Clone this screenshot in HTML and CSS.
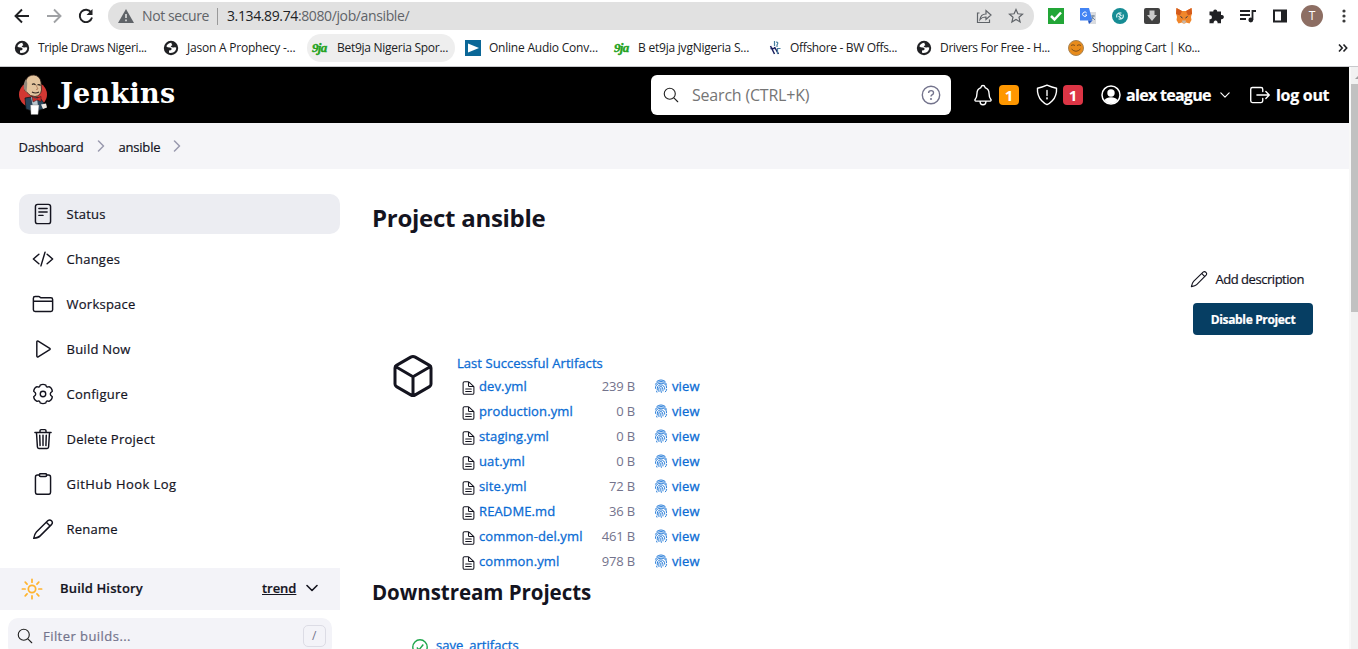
FILE: index.html
```html
<!DOCTYPE html>
<html lang="en">
<head>
<meta charset="utf-8">
<title>ansible [Jenkins]</title>
<link rel="stylesheet" href="styles.css">
</head>
<body>
<svg class="sprite" aria-hidden="true">
  <symbol id="status" viewBox="0 0 512 512"><rect x="80" y="32" width="352" height="448" rx="52"/><path d="M160 128h192M160 208h192M160 288h96"/></symbol>
  <symbol id="code" viewBox="0 0 512 512"><path d="M160 368L32 256l128-112M352 368l128-112-128-112M304 96l-96 320"/></symbol>
  <symbol id="folder" viewBox="0 0 512 512"><path d="M440 432H72a40 40 0 01-40-40V120a40 40 0 0140-40h75.89a40 40 0 0122.19 6.72l27.84 18.56a40 40 0 0022.19 6.72H440a40 40 0 0140 40v240a40 40 0 01-40 40zM32 192h448"/></symbol>
  <symbol id="play" viewBox="0 0 512 512"><path d="M112 91v330c0 17 17 28 31 20l270-168c12-8 12-26 0-34L143 71c-14-8-31 3-31 20z"/></symbol>
  <symbol id="gear" viewBox="0 0 24 24"><circle cx="12" cy="12" r="3"/><path d="M8.900 2.200Q12 .7 15.100 2.200Q15.300 5.200 18.600 4Q21.800 5.400 22.200 9Q19.900 10.500 19.900 12Q19.900 13.500 22.200 15Q21.800 18.600 18.600 20Q15.300 18.800 15.100 21.800Q12 23.300 8.900 21.800Q8.700 18.800 5.400 20Q2.200 18.600 1.800 15Q4.100 13.500 4.100 12Q4.100 10.500 1.800 9Q2.200 5.400 5.400 4Q8.700 5.200 8.900 2.200z"/></symbol>
  <symbol id="trash" viewBox="0 0 512 512"><path d="M104 104l22 338c1 20 14 34 34 34h192c20 0 33-14 34-34l22-338M68 104h376M186 104V64a26 26 0 0126-26h88a26 26 0 0126 26v40M256 170v240M180 170l8 240M332 170l-8 240"/></symbol>
  <symbol id="clipboard" viewBox="0 0 512 512"><path d="M336 48h48a48 48 0 0148 48v352a48 48 0 01-48 48H128a48 48 0 01-48-48V96a48 48 0 0148-48h48"/><rect x="172" y="16" width="168" height="64" rx="26"/></symbol>
  <symbol id="pencil" viewBox="0 0 512 512"><path d="M372 60L102 326Q66 362 40 474Q152 456 190 416L458 148A62 62 0 00372 60zM332 98l88 88"/></symbol>
  <symbol id="search" viewBox="0 0 512 512"><path d="M221 64a157 157 0 10157 157A157 157 0 00221 64zM338 338l110 110"/></symbol>
  <symbol id="cube" viewBox="0 0 512 512"><path d="M448 341.370V170.610A32 32 0 00432.110 143l-152-88.460a47.940 47.940 0 00-48.240 0L79.890 143A32 32 0 0064 170.610v170.760A32 32 0 0079.890 369l152 88.460a48 48 0 0048.240 0l152-88.460A32 32 0 00448 341.370zM69 154l187 110 187-110M256 464V264"/></symbol>
  <symbol id="doc" viewBox="0 0 512 512"><path d="M440 221V424a48 48 0 01-48 48H120a48 48 0 01-48-48V88a48 48 0 0148-48h123a32 32 0 0122 9l166 150a32 32 0 019 22zM256 50v126a32 32 0 0032 32h140M160 290h192M160 378h192"/></symbol>
  <symbol id="logout" viewBox="0 0 512 512"><path d="M320 336v56a40 40 0 01-40 40H80a40 40 0 01-40-40V120a40 40 0 0140-40h200a40 40 0 0140 40v56M392 336l80-80-80-80M184 256h280"/></symbol>
  <symbol id="shield" viewBox="0 0 512 512"><path d="M478 98C380 82 340 66 256 28 172 66 132 82 34 98 18 376 240 474 256 480c16-6 238-104 222-382zM256 150v120"/><circle cx="256" cy="335" r="8"/></symbol>
  <symbol id="bell" viewBox="0 0 512 512"><path d="M440 361C410 324 396 304 396 214 396 130 350 102 314 88c-4-2-8-6-10-10C298 52 280 34 256 34s-42 18-48 44c-2 4-6 8-10 10-36 14-82 42-82 126C116 304 102 324 72 361 60 376 70 398 90 398h332c20 0 30-22 18-37zM324 398v16a68 68 0 01-136 0v-16"/></symbol>
  <symbol id="chev-r" viewBox="0 0 12 12"><path d="M3.500 1l5 5-5 5"/></symbol>
  <symbol id="chev-d" viewBox="0 0 12 12"><path d="M1 3.500l5 5 5-5"/></symbol>
  <symbol id="finger" viewBox="0 0 24 24"><path d="M5 4Q12-1 19 4M2 9Q5 4.500 12 4.300T22 9M2.500 16Q2 7.500 12 7.200T21.500 15M5.500 19Q5 10.500 11 10Q18.500 10 18.500 17.500M8.500 21.500Q7 13 11.500 12.600Q15.500 13 15.500 20.500M12.500 23Q11 19 11.700 15.500M19.500 22Q21.500 20 21.700 18M5 22.500L4.500 21"/></symbol>
  <symbol id="globe" viewBox="0 0 16 16"><circle cx="8" cy="8" r="7.200" fill="#202124"/><path d="M8.500 2.800Q5 3 3.300 6.200q1.200 1.600 3.700 1.400 1.600 0 1.700 1.600-.7 1.300-2.700 1.300v2.300q4 .7 6-1.600 1.500-1.700 1.200-3.600-1.200-.5-2.500-.2-2 .2-3-.9.200-1 1.500-1 .2-1.200-.7-1.400z" fill="#fff"/></symbol>
</svg>

<div class="browser">
  <div class="toolbar">
    <svg class="nav" viewBox="0 0 16 16"><path d="M15 8H2M8 1.500L1.500 8 8 14.500"/></svg>
    <svg class="nav dim" viewBox="0 0 16 16"><path d="M1 8h13M8 1.500L14.500 8 8 14.500"/></svg>
    <svg class="nav" viewBox="0 0 16 16"><path d="M13.200 4.500A6.200 6.200 0 1014 9.500"/><path d="M14.500 1v6h-6z" class="solid"/></svg>
    <div class="address">
      <svg class="warn" viewBox="0 0 16 14"><path d="M8 0l8 14H0z" fill="#5f6368"/><path d="M8 5v4M8 10.500v1.700" stroke="#e1e1e1" stroke-width="1.600"/></svg>
      <span class="insecure">Not secure</span>
      <span class="url"><b>3.134.89.74</b>:8080/job/ansible/</span>
      <svg class="addr-ico" viewBox="0 0 16 16"><path d="M3.500 5H1.500v9.500h12v-3M4 11.500q.7-5.500 6-5.500V2.500L15 7l-5 4.500V9q-4-.2-6 2.500z"/></svg>
      <svg class="addr-ico star" viewBox="0 0 16 16"><path d="M8 1.500l1.900 4.300 4.600.4-3.500 3.100 1.100 4.600L8 11.400l-4.100 2.500L5 9.300 1.500 6.200l4.600-.4z"/></svg>
    </div>
    <div class="extensions">
      <svg viewBox="0 0 16 16"><path d="M0 0h16v16H0z" fill="#22a637"/><path d="M3 8l3.500 3.500L13 4.500" stroke="#fff" stroke-width="2.500" fill="none"/></svg>
      <svg viewBox="0 0 16 16"><path d="M6 4h10v12H9z" fill="#dadce0"/><path d="M0 0h9l3.500 12.500H0z" fill="#4384f4"/><path d="M12.500 12.500L9 16l-1-3.500z" fill="#1e55c4"/><path d="M6.700 5A2.200 2.200 0 106.900 7H5" stroke="#fff" fill="none"/><path d="M11 8h4M13 7v1q0 3-2 4M12 9l3 3" stroke="#71869c" fill="none"/></svg>
      <svg viewBox="0 0 16 16"><circle cx="8" cy="8" r="8" fill="#168c94"/><path d="M5 9.500Q3.800 6.500 6.500 5.200L9.500 8M11 6.500q1.200 3-1.500 4.300L6.500 8M6.500 5.200q1.700-.8 3 0M9.500 10.800q-1.700.8-3 0" fill="none" stroke="#d3eff0" stroke-width="1.200"/></svg>
      <svg viewBox="0 0 16 16"><rect width="16" height="16" rx="2" fill="#414141"/><path d="M5.500 2.500h5V7H13l-5 6-5-6h2.500z" fill="#c9c9c9"/></svg>
      <svg viewBox="0 0 16 16"><path d="M.5 0L6 3h4l5.500-3 .5 5-1 4 .5 3-2 3.500-3.500-1L9 15.500H7l-1-1-3.500 1L.5 12 1 9 0 5z" fill="#f0862b"/><path d="M.5 0L6 3 4 7.500 0 6zM15.500 0L10 3l2 4.500L16 6z" fill="#d45a1b"/><path d="M6 12.500h4l-.5 2.500h-3z" fill="#c6b8aa"/><path d="M4.500 8.500l2 1.500M11.500 8.500l-2 1.500" stroke="#233447"/></svg>
      <svg viewBox="0 0 16 16"><path d="M2 3.500h3.200a2 2 0 114 0H13v3.500a2.200 2.200 0 110 4.200V15.200H9.500a2 2 0 10-3.800 0H1.500v-4a2 2 0 100-3.900V3.500z" fill="#202124"/></svg>
      <svg viewBox="0 0 16 16"><path d="M0 3h10M0 7h10M0 11h6M12.500 12V3H16" stroke="#202124" stroke-width="1.800" fill="none"/><circle cx="10.800" cy="12" r="2.400" fill="#202124"/></svg>
      <svg viewBox="0 0 16 16"><path d="M2 2.500h12v11H2z" fill="none" stroke="#202124" stroke-width="2"/><path d="M9 2h6v12H9z" fill="#202124"/></svg>
      <span class="avatar">T</span>
      <svg viewBox="0 0 16 16"><g fill="#3c3c3c"><circle cx="8" cy="3" r="1.600"/><circle cx="8" cy="8" r="1.600"/><circle cx="8" cy="13" r="1.600"/></g></svg>
    </div>
  </div>
  <div class="bookmarks">
    <span class="bm"><svg><use href="#globe"/></svg>Triple Draws Nigeri...</span>
    <span class="bm looser"><svg><use href="#globe"/></svg>Jason A Prophecy -...</span>
    <span class="bm active"><i class="nineja">9ja</i>Bet9ja Nigeria Spor...</span>
    <span class="bm looser"><svg viewBox="0 0 16 16"><path d="M0 0h16v16H0z" fill="#0b6797"/><path d="M3 3.500l11 4.500-11 4.500z" fill="#fff"/></svg>Online Audio Conv...</span>
    <span class="bm looser"><i class="nineja">9ja</i>B et9ja jvgNigeria S...</span>
    <span class="bm short"><svg viewBox="0 0 16 16" fill="none"><path d="M2.500 6l4 8M6.500 7l4 7M2.500 8.500h4" stroke="#1c2260" stroke-width="1.500"/><path d="M6.500 1v5M8 2q3 0 1 3v2M9.500 8v6M10 8.500h2.500" stroke="#477fa0" stroke-width="1.200"/></svg>Offshore - BW Offs...</span>
    <span class="bm"><svg><use href="#globe"/></svg>Drivers For Free - H...</span>
    <span class="bm tighter"><svg viewBox="0 0 16 16"><circle cx="8" cy="8" r="7.500" fill="#e88b1b" stroke="#a88454"/><path d="M3 5.500q2-1.500 4 0M9 5.500q2-1.500 4 0M3.500 9q4.500 4.500 9 0" fill="none" stroke="#80501b"/></svg>Shopping Cart | Ko...</span>
    <svg class="more" viewBox="0 0 10 10"><path d="M1 1.500L4.200 5 1 8.500M5.500 1.500L8.700 5 5.500 8.500"/></svg>
  </div>
</div>

<div class="viewport">
  <div class="page">
    <header class="jenkins-header">
      <svg class="butler" viewBox="0 0 30 42">
        <ellipse cx="15" cy="20.500" rx="14" ry="13" fill="#d33833"/>
        <path d="M7 24l6-1 9 1 4 5q1 4-1 6-9 4-17 0z" fill="#29455b" stroke="#111" stroke-width=".7"/>
        <path d="M13 23l6 1 1 8-5 1z" fill="#b9c6ce"/>
        <path d="M8 6Q10 1 16 1q6 1 7 7l.5 8q-1 6-6.500 6.500-5 0-8-4Q6 17 7 13z" fill="#e3c49e" stroke="#35251d" stroke-width=".8"/>
        <path d="M8 5Q5 9 6 15l2.500 3 .5-5Q10 9 8 5z" fill="#92877b"/>
        <path d="M14 10.500q2-1.500 3.500.5M19.500 11q1.500-1 3 .5M14 18q3.500 2 7 0" fill="none" stroke="#2d231e" stroke-width="1.100"/>
        <path d="M18 11l2 4-2 .5" fill="none" stroke="#a36c4c" stroke-width=".7"/>
        <path d="M14 22.500l4 2 5-2v5l-4-1.500-4 2z" fill="#d32e2b" stroke="#24151a" stroke-width=".5"/>
        <path d="M12.500 31h8.500l-1 9.500h-7z" fill="#fff" stroke="#777" stroke-width=".4"/>
        <path d="M23 30.500l5-1 1 4-4 1.500z" fill="#ece7e2"/>
      </svg>
      <span class="wordmark">Jenkins</span>
      <div class="searchbox">
        <svg class="ico s18"><use href="#search"/></svg>
        <span class="search-text">Search (CTRL+K)</span>
        <svg class="help" viewBox="0 0 20 20"><circle cx="10" cy="10" r="8.700"/><path d="M7.600 8q0-2.400 2.500-2.400T12.500 8q0 1.100-1.500 1.900-1 .7-1 1.700"/><circle cx="10" cy="14" r=".4"/></svg>
      </div>
      <div class="alert bell"><svg class="ico s22"><use href="#bell"/></svg><span class="badge">1</span></div>
      <div class="alert sec"><svg class="ico s22"><use href="#shield"/></svg><span class="badge red">1</span></div>
      <div class="user"><svg class="person" viewBox="0 0 20 20"><circle cx="10" cy="10" r="9" fill="none" stroke="#fff" stroke-width="1.500"/><circle cx="10" cy="8" r="3.700" fill="#fff"/><path d="M3.500 15Q5.500 12.200 10 12.200T16.500 15Q14 18.500 10 18.500T3.500 15z" fill="#fff"/></svg><span>alex teague</span><svg class="ico s10"><use href="#chev-d"/></svg></div>
      <div class="logout"><svg class="ico s22"><use href="#logout"/></svg><span>log out</span></div>
    </header>
    <nav class="crumbs"><span class="c1">Dashboard</span><svg class="ico"><use href="#chev-r"/></svg><span class="c2">ansible</span><svg class="ico"><use href="#chev-r"/></svg></nav>
    <div class="body">
      <aside class="side">
        <div class="tasks">
          <a class="task on"><svg class="ico"><use href="#status"/></svg><span>Status</span></a>
          <a class="task"><svg class="ico"><use href="#code"/></svg><span>Changes</span></a>
          <a class="task"><svg class="ico"><use href="#folder"/></svg><span>Workspace</span></a>
          <a class="task"><svg class="ico"><use href="#play"/></svg><span>Build Now</span></a>
          <a class="task"><svg class="ico gear"><use href="#gear"/></svg><span>Configure</span></a>
          <a class="task"><svg class="ico"><use href="#trash"/></svg><span>Delete Project</span></a>
          <a class="task"><svg class="ico"><use href="#clipboard"/></svg><span class="wide">GitHub Hook Log</span></a>
          <a class="task"><svg class="ico"><use href="#pencil"/></svg><span>Rename</span></a>
        </div>
        <div class="history">
          <svg class="sun" viewBox="0 0 24 24"><circle cx="12" cy="12" r="4"/><path d="M12 1.500v3M12 19.500v3M1.500 12h3M19.500 12h3M4.600 4.600l2 2M17.400 17.400l2 2M4.600 19.400l2-2M17.400 6.600l2-2"/></svg>
          <span class="h-title">Build History</span><a class="trend">trend</a><svg class="ico caret"><use href="#chev-d"/></svg>
        </div>
        <div class="filter"><svg class="ico s18"><use href="#search"/></svg><span>Filter builds...</span><kbd>/</kbd></div>
      </aside>
      <main>
        <h1>Project ansible</h1>
        <div class="actions">
          <a class="add"><svg class="ico s18"><use href="#pencil"/></svg><span>Add description</span></a>
          <button>Disable Project</button>
        </div>
        <div class="artifacts">
          <svg class="ico cube"><use href="#cube"/></svg>
          <div>
            <a class="last">Last Successful Artifacts</a>
            <div class="files">
              <div class="file"><svg class="ico"><use href="#doc"/></svg><a>dev.yml</a><span class="size">239 B</span><svg class="ico finger"><use href="#finger"/></svg><a>view</a></div>
              <div class="file"><svg class="ico"><use href="#doc"/></svg><a>production.yml</a><span class="size">0 B</span><svg class="ico finger"><use href="#finger"/></svg><a>view</a></div>
              <div class="file"><svg class="ico"><use href="#doc"/></svg><a>staging.yml</a><span class="size">0 B</span><svg class="ico finger"><use href="#finger"/></svg><a>view</a></div>
              <div class="file"><svg class="ico"><use href="#doc"/></svg><a>uat.yml</a><span class="size">0 B</span><svg class="ico finger"><use href="#finger"/></svg><a>view</a></div>
              <div class="file"><svg class="ico"><use href="#doc"/></svg><a>site.yml</a><span class="size">72 B</span><svg class="ico finger"><use href="#finger"/></svg><a>view</a></div>
              <div class="file"><svg class="ico"><use href="#doc"/></svg><a>README.md</a><span class="size">36 B</span><svg class="ico finger"><use href="#finger"/></svg><a>view</a></div>
              <div class="file"><svg class="ico"><use href="#doc"/></svg><a>common-del.yml</a><span class="size">461 B</span><svg class="ico finger"><use href="#finger"/></svg><a>view</a></div>
              <div class="file"><svg class="ico"><use href="#doc"/></svg><a>common.yml</a><span class="size">978 B</span><svg class="ico finger"><use href="#finger"/></svg><a>view</a></div>
            </div>
          </div>
        </div>
        <h2>Downstream Projects</h2>
        <div class="down"><svg viewBox="0 0 16 16"><circle cx="8" cy="8" r="7.200"/><path d="M4.800 8.500l2.200 2.300 4.300-5.300"/></svg><a>save_artifacts</a></div>
      </main>
    </div>
  </div>
  <div class="scroll"><svg class="arrow" viewBox="0 0 8 6"><path d="M8 0v6H2z" fill="#a0a0a0"/></svg><div class="thumb"></div></div>
</div>
</body>
</html>
```
FILE: styles.css
```css
* { box-sizing: border-box; }
body { margin: 0; width: 1358px; height: 649px; overflow: hidden; background: #fff; color: #14141f; font-family: "Open Sans", "Noto Sans", sans-serif; font-size: 13px; display: flex; flex-direction: column; }
svg { display: block; flex: none; }
.sprite { width: 0; height: 0; position: absolute; }
span, a { white-space: nowrap; }
.ico { fill: none; stroke: currentColor; stroke-width: 32px; stroke-linecap: round; stroke-linejoin: round; }
.s18 { width: 18px; height: 18px; }
.s22 { width: 22px; height: 22px; }
.s10 { width: 10px; height: 10px; stroke-width: 1.400px; }

/* browser chrome */
.browser { height: 67px; flex: none; border-bottom: 1px solid #c8c9cc; }
.toolbar { height: 32px; display: flex; align-items: center; padding-left: 14px; }
.nav { width: 16px; height: 16px; margin-right: 16px; fill: none; stroke: #202124; stroke-width: 1.900; }
.nav .solid { fill: #202124; stroke: none; }
.dim { stroke: #a0a2a5; }
.nav + .address { margin-left: -2px; }
.address { width: 926px; height: 28px; border-radius: 14px; background: #e1e1e1; display: flex; align-items: center; padding: 0 10px; font-size: 14px; color: #5f6368; }
.warn { width: 16px; height: 14px; }
.insecure { width: 76px; margin-left: 8px; height: 17px; line-height: 16px; border-right: 1px solid #999; letter-spacing: -.4px; }
.url { margin-left: 9px; flex: 1; letter-spacing: -.38px; line-height: 16px; }
.url b { font-weight: 400; color: #202124; }
.addr-ico { width: 16px; height: 16px; fill: none; stroke: #5f6368; stroke-width: 1.200; }
.star { margin-left: 16px; }
.extensions { margin-left: 14px; display: flex; align-items: center; gap: 16px; }
.extensions svg { width: 16px; height: 16px; }
.avatar { width: 22px; height: 22px; border-radius: 50%; background: #8d6e63; color: #fff; font-size: 12px; line-height: 22px; text-align: center; margin: 0 -3px; }
.bookmarks { height: 32px; padding-left: 9px; display: grid; grid-template-columns: 149px 149px 153px 149px 154px 148px 152px 275px 10px; align-items: center; font-size: 12px; line-height: 16px; color: #202124; }
.bm { height: 28px; display: flex; align-items: center; gap: 8px; padding: 0 0 1px 5px; letter-spacing: -.33px; }
.looser { letter-spacing: -.22px; }
.tighter { letter-spacing: -.4px; }
.bm svg { width: 16px; height: 16px; }
.short { gap: 6px; }
.active { background: #eee; border-radius: 14px; width: 148px; gap: 9px; letter-spacing: -.27px; }
.nineja { width: 16px; font: italic bold 13px "Liberation Serif", serif; letter-spacing: -.7px; color: #22a21c; -webkit-text-stroke: .4px #22a21c; }
.more { width: 10px; height: 10px; stroke: #202124; stroke-width: 1.600; fill: none; }

/* page */
.viewport { flex: 1; min-height: 0; display: flex; overflow: hidden; }
.page { width: 1349px; overflow: hidden; }
.scroll { width: 9px; background: #f1f1f1; border-left: 2px solid #f8f8f8; }
.arrow { width: 8px; height: 6px; margin: 6px 0 5px 2px; }
.thumb { height: 228px; background: #c1c1c1; }
.jenkins-header { height: 56px; background: #000; color: #fff; display: flex; align-items: center; padding-left: 18px; font-weight: 700; font-size: 16px; }
.butler { width: 30px; height: 42px; }
.wordmark { width: 603px; padding-left: 12px; font: bold 27px/34px "DejaVu Serif", serif; letter-spacing: .3px; margin-top: -2px; }
.searchbox { width: 300px; height: 40px; border-radius: 6px; background: #fff; display: flex; align-items: center; padding: 0 10px 0 11px; color: #222; }
.search-text { margin-left: 12px; flex: 1; font-weight: 400; color: #757575; letter-spacing: -.2px; }
.help { width: 20px; height: 20px; fill: none; stroke: #73738c; stroke-width: 1.400; }
.alert { display: flex; align-items: center; gap: 5px; }
.bell { margin-left: 21px; }
.sec { margin-left: 17px; }
.badge { width: 20px; height: 20px; line-height: 20px; border-radius: 4px; background: #fe9700; text-align: center; font-size: 15px; }
.red { background: #dc3545; }
.user { margin-left: 18px; display: flex; align-items: center; }
.person { width: 20px; height: 20px; }
.user span { width: 94px; margin-left: 5px; letter-spacing: -.7px; -webkit-text-stroke: .2px; }
.logout { margin-left: 19px; display: flex; align-items: center; gap: 5px; letter-spacing: -.3px; -webkit-text-stroke: .2px; }
.crumbs { height: 46px; background: #f5f5f8; display: flex; align-items: center; padding: 2px 0 0 18.500px; }
.crumbs, .task span, .filter span, .add span { -webkit-text-stroke: .2px; }
.crumbs svg { width: 12px; height: 12px; color: #9a9aae; stroke-width: 1.500px; margin-top: -3px; }
.c1 { width: 76px; letter-spacing: -.25px; }
.c2 { width: 52px; margin-left: 12px; letter-spacing: -.2px; }
.body { display: flex; }
.side { width: 340px; padding-top: 25px; }
.tasks { padding-left: 19px; display: flex; flex-direction: column; gap: 5px; }
.task { height: 40px; border-radius: 10px; display: flex; align-items: center; gap: 12.500px; padding-left: 13px; letter-spacing: .25px; }
.wide { letter-spacing: .45px; }
.task svg { width: 22px; height: 22px; stroke-width: 34px; }
.task svg.gear { stroke-width: 1.500px; }
.on { background: #ecedf2; }
.history { height: 42px; margin-top: 19px; background: #f3f3f8; display: flex; align-items: center; padding: 0 22px 2px 21px; font-weight: 600; letter-spacing: .15px; -webkit-text-stroke: .2px; }
.sun { width: 22px; height: 22px; fill: none; stroke: #ffb32e; stroke-width: 1.900; stroke-linecap: round; margin-top: 2px; }
.h-title { flex: 1; margin-left: 17px; }
.trend { text-decoration: underline; width: 35px; letter-spacing: -.05px; }
.caret { width: 12px; height: 12px; stroke-width: 1.600px; margin-left: 9px; }
.filter { height: 38px; margin: 8px 8px 0; border-radius: 10px; background: #f3f3f8; display: flex; align-items: center; padding: 0 6px 2px 8px; color: #73738c; letter-spacing: .45px; }
.filter svg { color: #222; }
.filter span { flex: 1; margin-left: 9px; }
kbd { width: 23px; height: 22px; border: 1px solid #dcdce5; border-radius: 5px; font: 12px/20px "Open Sans", sans-serif; text-align: center; }
main { flex: 1; padding: 33px 36px 0 32px; }
h1 { margin: 0; font-size: 24px; line-height: 32px; font-weight: 700; letter-spacing: -.27px; }
h2 { margin: 4px 0 0; font-size: 20.500px; line-height: 30px; font-weight: 700; letter-spacing: -.05px; }
.actions { display: flex; flex-direction: column; align-items: flex-end; margin-top: 33px; }
.add { display: flex; align-items: center; gap: 7px; height: 24px; padding-right: 9px; letter-spacing: -.46px; }
button { width: 120px; height: 32px; margin-top: 12px; border: 0; border-radius: 4px; padding: 0; background: #063e63; color: #fff; font: 700 12px "Open Sans", sans-serif; letter-spacing: -.35px; -webkit-text-stroke: .2px; }
.artifacts { display: flex; align-items: flex-start; margin-top: 18px; padding-left: 17px; }
.cube { width: 48px; height: 50px; margin-right: 20px; stroke-width: 32px; margin-top: -2px; }
.last, .file a, .down a { color: #0b6cd4; letter-spacing: .05px; -webkit-text-stroke: .3px; }
.last { display: block; line-height: 20px; }
.files { padding-left: 3px; }
.file { height: 25px; display: grid; grid-template-columns: 15px 108px 44px 13px 1fr; column-gap: 4px; align-items: center; }
.file a { line-height: 20px; letter-spacing: .12px; }
.file .ico { width: 15px; height: 16px; margin: 4px 0 0 .5px; stroke-width: 36px; }
.size { color: #73738c; text-align: right; letter-spacing: -.15px; }
.file .finger { width: 14px; height: 16px; margin: 1px 0 0 15px; stroke-width: 1.500px; color: #0b6cd4; }
.file .finger + a { margin-left: 16px; }
.down { display: flex; align-items: center; gap: 8px; padding: 28px 0 0 40px; }
.down a { line-height: 20px; }
.down svg { width: 16px; height: 16px; margin-top: 3px; fill: none; stroke: #1ea64b; stroke-width: 1.400; }
```
